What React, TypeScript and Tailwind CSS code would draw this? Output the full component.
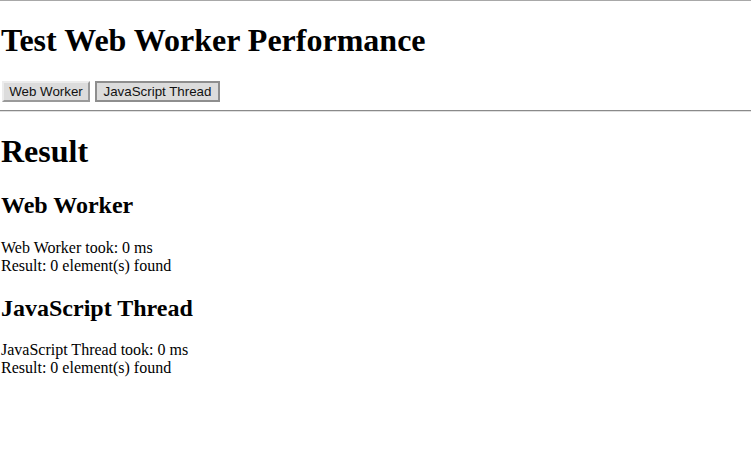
import React from "react";

export default function App() {
  const serif = { fontFamily: '"Liberation Serif", "Times New Roman", serif' };
  return (
    <div className="min-h-[469px] bg-white text-black" style={serif}>
      <div className="h-px bg-[#a8a8a8]" />
      <div className="pl-px">
        <h1 className="text-[32px] font-bold leading-[normal] mt-[21.44px] mb-[21.44px]">Test Web Worker Performance</h1>
        <div className="flex gap-[5px] items-center h-[21px] pl-px">
          <button className="h-[21px] w-[88px] bg-[#dcdcdc] border-2 border-t-[#ececec] border-l-[#ececec] border-r-[#9a9a9a] border-b-[#9a9a9a] text-[13.33px] text-[#111] leading-none font-['Liberation_Sans',Arial,sans-serif]">
            Web Worker
          </button>
          <button className="h-[21px] w-[125px] bg-[#dcdcdc] border-2 border-[#8e8e8e] text-[13.33px] text-[#111] leading-none font-['Liberation_Sans',Arial,sans-serif]">
            JavaScript Thread
          </button>
        </div>
      </div>
      <div className="mt-[8px] h-[2px] border-t border-[#8a8a8a] border-b border-b-[#e0e0e0]" />
      <div className="pl-px">
        <h1 className="text-[32px] font-bold leading-[normal] mt-[21.44px] mb-[21.44px]">Result</h1>
        <h2 className="text-[24px] font-bold leading-[normal] mt-[19.92px] mb-[19.92px]">Web Worker</h2>
        <div className="text-[16px] leading-[18px]">
          <div>Web Worker took: 0 ms</div>
          <div>Result: 0 element(s) found</div>
        </div>
        <h2 className="text-[24px] font-bold leading-[normal] mt-[19.92px] mb-[19.92px]">JavaScript Thread</h2>
        <div className="text-[16px] leading-[18px]">
          <div>JavaScript Thread took: 0 ms</div>
          <div>Result: 0 element(s) found</div>
        </div>
      </div>
    </div>
  );
}
